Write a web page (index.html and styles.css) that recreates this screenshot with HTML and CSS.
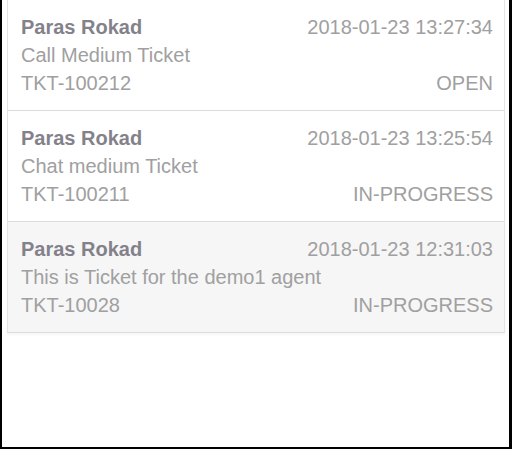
FILE: index.html
```html
<!DOCTYPE html>
<html lang="en">
<head>
<meta charset="utf-8">
<title>Tickets</title>
<link rel="stylesheet" href="styles.css">
</head>
<body>
<div class="frame">
  <ul class="ticket-list">
    <li class="ticket">
      <div class="row"><span class="name">Paras Rokad</span><span class="date">2018-01-23 13:27:34</span></div>
      <div class="row"><span class="subject">Call Medium Ticket</span></div>
      <div class="row"><span class="id">TKT-100212</span><span class="status">OPEN</span></div>
    </li>
    <li class="ticket">
      <div class="row"><span class="name">Paras Rokad</span><span class="date">2018-01-23 13:25:54</span></div>
      <div class="row"><span class="subject">Chat medium Ticket</span></div>
      <div class="row"><span class="id">TKT-100211</span><span class="status">IN-PROGRESS</span></div>
    </li>
    <li class="ticket active">
      <div class="row"><span class="name">Paras Rokad</span><span class="date">2018-01-23 12:31:03</span></div>
      <div class="row"><span class="subject">This is Ticket for the demo1 agent</span></div>
      <div class="row"><span class="id">TKT-10028</span><span class="status">IN-PROGRESS</span></div>
    </li>
  </ul>
</div>
</body>
</html>
```

FILE: styles.css
```css
html, body {
  margin: 0;
  padding: 0;
  background: #fff;
}

.frame {
  box-sizing: border-box;
  width: 512px;
  height: 449px;
  border-left: 2px solid #000;
  border-right: 3px solid #000;
  border-bottom: 2px solid #000;
  padding: 0 4px 0 5px;
  font-family: "Liberation Sans", Arial, sans-serif;
  font-size: 20px;
  line-height: 28px;
  color: #a0a0a0;
}

.ticket-list {
  list-style: none;
  margin: 0;
  padding: 0;
}

.ticket {
  padding: 13px 11px 13px 13px;
  border-left: 1px solid #e4e4e4;
  border-right: 1px solid #e4e4e4;
  border-bottom: 1px solid #dcdcdc;
  background: #fff;
}

.ticket.active {
  background: #f6f6f6;
  box-shadow: 0 2px 3px rgba(0, 0, 0, 0.04);
}

.row {
  display: flex;
  justify-content: space-between;
  white-space: nowrap;
}

.name {
  font-weight: bold;
  color: #83828b;
}

.date,
.status,
.subject,
.id {
  color: #a0a0a0;
}
```
